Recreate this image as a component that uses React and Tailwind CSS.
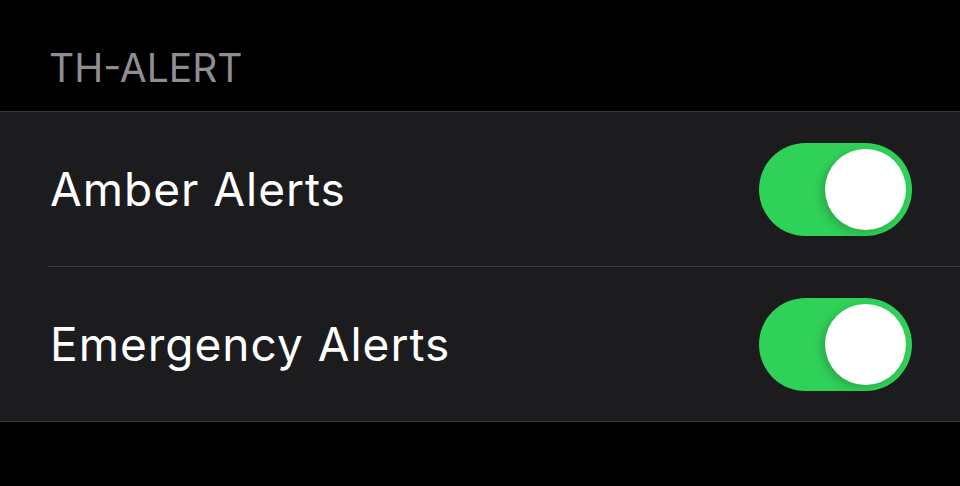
export default function App() {
  const rows = ["Amber Alerts", "Emergency Alerts"];
  return (
    <div
      className="w-[960px] h-[486px] bg-black overflow-hidden"
      style={{ fontFamily: "Inter, 'Noto Sans', sans-serif" }}
    >
      <div className="h-[111px] pl-[49px] pt-[44px] text-[39px] leading-[48px] text-[#8e8e93]">
        TH-ALERT
      </div>
      <div className="bg-[#1c1c1e] border-t border-b border-[#3a3a3c]">
        {rows.map((label, i) => (
          <div key={label}>
            {i > 0 && <div className="ml-[48px] h-px bg-[#3a3a3c]" />}
            <div className="h-[154px] flex items-center justify-between pl-[50px] pr-[48px]">
              <span className="text-[46px] tracking-[1px] text-white leading-none">{label}</span>
              <div className="w-[153px] h-[93px] rounded-full bg-[#30d158] flex items-center justify-end pr-[6px]">
                <div className="w-[81px] h-[81px] rounded-full bg-white shadow-[-4px_3px_8px_rgba(0,0,0,0.18)]" />
              </div>
            </div>
          </div>
        ))}
      </div>
    </div>
  );
}
